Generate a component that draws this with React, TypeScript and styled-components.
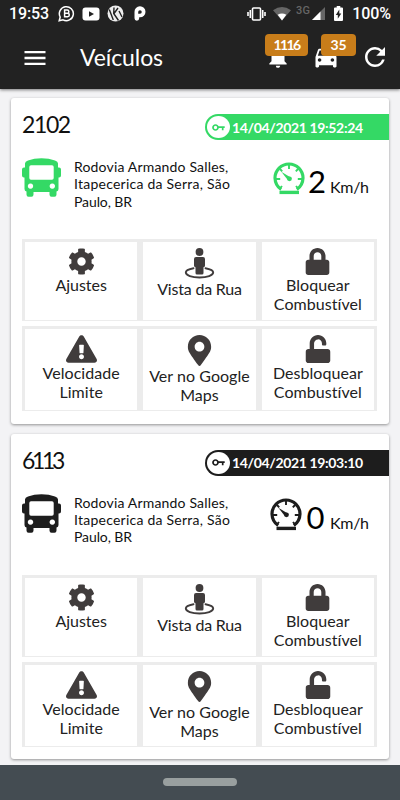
import React from "react";
import styled, { createGlobalStyle } from "styled-components";
import { FaCog, FaExclamationTriangle, FaLock, FaMapMarkerAlt, FaUnlock } from "react-icons/fa";
import { MdDirectionsCar, MdMenu, MdNotifications, MdRefresh } from "react-icons/md";

const Global = createGlobalStyle`
  * { box-sizing: border-box; }
  body { margin: 0; background: #f4f4f6; }
  svg { display: block; flex: none; }
`;

const Screen = styled.div`
  width: 400px;
  height: 800px;
  display: flex;
  flex-direction: column;
  overflow: hidden;
  background: #f3f3f5;
  color: #111;
  font-family: Lato, "Open Sans", sans-serif;
  white-space: nowrap;
`;

const Top = styled.header`
  height: 89px;
  background: #222;
  color: #fff;
  box-shadow: 0 1px 3px rgba(0, 0, 0, 0.5);
`;

const StatusBar = styled.div`
  height: 27px;
  padding: 0 9px;
  display: flex;
  align-items: center;
  justify-content: space-between;
  font-family: Roboto, sans-serif;
`;

const StatusGroup = styled.div`
  display: flex;
  align-items: center;
  height: 27px;
`;

const StatusText = styled.span<{ $size: number; $spacing: number }>`
  font-size: ${(p) => p.$size}px;
  font-weight: 500;
  letter-spacing: ${(p) => p.$spacing}px;
`;

const Network = styled.span`
  color: #666;
  font-size: 11px;
  font-weight: 500;
  letter-spacing: 0.3px;
  margin: 0 2px 6px 5px;
`;

const Toolbar = styled.div`
  height: 62px;
  display: flex;
  align-items: center;
  padding: 0 10px 0 21px;
`;

const PageTitle = styled.h1<{ $spacing: number }>`
  flex: 1;
  margin: -2px 0 0 31px;
  font-size: 23px;
  font-weight: 400;
  line-height: 30px;
  letter-spacing: ${(p) => p.$spacing}px;
`;

const Action = styled.div<{ $gap: number }>`
  position: relative;
  margin: -2px 0 0 ${(p) => p.$gap}px;
`;

const Badge = styled.span<{ $width: number; $left: number; $top: number; $spacing: number }>`
  position: absolute;
  left: ${(p) => p.$left}px;
  top: ${(p) => p.$top}px;
  width: ${(p) => p.$width}px;
  height: 22px;
  border-radius: 4px;
  background: #c87d1a;
  font-size: 14px;
  font-weight: 700;
  line-height: 21px;
  text-align: center;
  letter-spacing: ${(p) => p.$spacing}px;
`;

const List = styled.main`
  flex: 1;
  padding: 9px 11px 0;
  display: flex;
  flex-direction: column;
  gap: 10px;
`;

const Card = styled.article`
  height: 325.5px;
  flex: none;
  padding-left: 11px;
  background: #fff;
  border-radius: 3px;
  box-shadow: 0 1px 3px rgba(0, 0, 0, 0.4);
`;

const CardHead = styled.div`
  display: flex;
  justify-content: space-between;
  padding-top: 16px;
  height: 60px;
`;

const Plate = styled.h2<{ $spacing: number }>`
  margin: -4px 0 0;
  font-size: 23px;
  font-weight: 400;
  line-height: 28px;
  letter-spacing: ${(p) => p.$spacing}px;
`;

const Stamp = styled.div<{ $color: string }>`
  width: 184px;
  height: 26px;
  padding-left: 2px;
  display: flex;
  align-items: center;
  gap: 2px;
  border-radius: 13px 0 0 13px;
  background: ${(p) => p.$color};
  color: #fff;
  font-size: 14px;
  font-weight: 700;
`;

const StampText = styled.span<{ $spacing: number }>`
  letter-spacing: ${(p) => p.$spacing}px;
`;

const KeyDisc = styled.span<{ $color: string }>`
  width: 23px;
  height: 22px;
  border-radius: 50%;
  display: grid;
  place-items: center;
  background: #fff;
  color: ${(p) => p.$color};
`;

const Info = styled.div<{ $color: string }>`
  height: 81px;
  display: flex;
  color: ${(p) => p.$color};
`;

const Address = styled.p`
  width: 188px;
  margin: 0 0 0 13px;
  color: #111;
  font-size: 14px;
  line-height: 17.3px;
`;

const Line = styled.span<{ $spacing: number }>`
  display: block;
  letter-spacing: ${(p) => p.$spacing}px;
`;

const Speed = styled.div`
  flex: 1;
  height: 42px;
  padding: 4px 20px 0 0;
  display: flex;
  justify-content: flex-end;
`;

const SpeedValue = styled.span<{ $width: number }>`
  margin-left: 4px;
  color: #000;
  font-size: 31px;
  line-height: 38px;
  width: ${(p) => p.$width}px;
  display: flex;
  justify-content: center;
`;

const Unit = styled.span`
  margin-left: 5px;
  width: 39px;
  color: #111;
  font-size: 16px;
  line-height: 50px;
  letter-spacing: -0.3px;
`;

const Grid = styled.div`
  width: 355px;
  display: grid;
  grid-template-columns: repeat(3, 1fr);
  grid-template-rows: 82px 85px;
  row-gap: 5px;
`;

const Cell = styled.button`
  display: flex;
  flex-direction: column;
  align-items: center;
  min-width: 0;
  padding: 6px 0 0;
  border: solid #ececec;
  border-width: 3px 3px 1px;
  background: #fff;
  color: #403c3c;
  font-family: inherit;
`;

const Label = styled.span<{ $spacing: number }>`
  color: #222;
  font-size: 16px;
  line-height: 19.3px;
  text-align: center;
  white-space: nowrap;
  letter-spacing: ${(p) => p.$spacing}px;
`;

const NavBar = styled.footer`
  height: 35px;
  flex: none;
  background: #444c52;
  display: flex;
  justify-content: center;
  padding-top: 13px;
`;

const Handle = styled.div`
  width: 74px;
  height: 8px;
  border-radius: 4px;
  background: #999f9f;
`;

const Gauge = () => (
  <svg width="32" height="33" viewBox="0 0 32 33" fill="none" stroke="currentColor">
    <path d="M8.2 27.4Q2.200 23.500 2 16A14 14 0 0 1 30 16Q29.800 23.500 23.800 27.400" strokeWidth="3.2" />
    <path d="M3 17h4.200M24.800 17h4.200M16 3v4M7 7l2.200 2.400M25 7l-2.200 2.400M6.500 27l2.500-3M25.500 27l-2.500-3" strokeWidth="1.9" />
    <path d="M8.300 9.700L15 18.300L18.200 15.700Z" fill="currentColor" stroke="none" />
    <circle cx="16.5" cy="16.8" r="2.4" fill="currentColor" stroke="none" />
    <path d="M6.500 30.400h19.500" strokeWidth="3.4" />
  </svg>
);

const Bus = () => (
  <svg width="39" height="39" viewBox="0 0 39 39" fill="currentColor">
    <path
      fillRule="evenodd"
      d="M3 9.500V5.500Q3 3.500 6 2.400Q12 .3 19.500 .3T33 2.400Q36 3.500 36 5.500V9.500H37Q39 9.500 39 11.500V17.500Q39 19.500 37 19.500H36.500V31Q36.500 33 34.500 33.500V36.500Q34.500 38.800 32.500 38.800H29.500Q27.500 38.800 27.500 36.500V34H11.500V36.500Q11.500 38.800 9.500 38.800H6.500Q4.500 38.800 4.500 36.500V33.500Q2.500 33 2.500 31V19.500H2Q0 19.500 0 17.500V11.500Q0 9.500 2 9.500ZM9 7.300Q7.300 7.300 7.300 9V20Q7.300 21.700 9 21.700H30Q31.700 21.700 31.700 20V9Q31.700 7.300 30 7.300ZM8.500 25.400a2.700 2.700 0 1 0 .01 0ZM30.300 25.400a2.700 2.700 0 1 0 .01 0Z"
    />
  </svg>
);

const KeyIcon = () => (
  <svg width="13" height="7" viewBox="0 0 13 7" fill="none" stroke="currentColor" strokeWidth="1.7">
    <circle cx="3.500" cy="3.500" r="2.500" />
    <path d="M6 3.200H12.700M10.700 3v3.200" />
  </svg>
);

const StreetView = () => (
  <svg width="31" height="31" viewBox="0 0 31 31" fill="currentColor">
    <path d="M9.500 20.200Q1.800 21.600 1.800 24.300C1.800 27.400 7.900 29.500 15.500 29.500S29.200 27.400 29.200 24.300Q29.200 21.600 21.500 20.200" fill="none" stroke="currentColor" strokeWidth="1.900" strokeLinecap="round" />
    <circle cx="15.500" cy="4" r="3.900" />
    <path d="M12 9H19Q21 9 21 11V17.500Q21 19 19.500 19.300V25Q19.500 26.500 18 26.500H13Q11.500 26.500 11.500 25V19.300Q10 19 10 17.500V11Q10 9 12 9Z" />
  </svg>
);

const WarningIcon = styled(FaExclamationTriangle)`
  width: 31px;
  height: 28px;
`;

const BusinessChat = () => (
  <svg width="17" height="17" viewBox="0 0 17 17" fill="none" stroke="#fff" strokeWidth="1.5">
    <path d="M1.2 15.7L2.2 12A7 7 0 1 1 5 14.8Z" />
    <path d="M6.600 5h2.600a1.600 1.600 0 0 1 0 3.300H6.600ZM6.600 8.300h3a1.700 1.700 0 0 1 0 3.400h-3Z" />
  </svg>
);

const VideoApp = () => (
  <svg width="18" height="14" viewBox="0 0 18 14">
    <rect x="0.5" y="0.5" width="17" height="13" rx="3" fill="#fff" />
    <path d="M7 4.200v5.600L12 7Z" fill="#222" />
  </svg>
);

const RoundLogo = () => (
  <svg width="17" height="17" viewBox="0 0 17 17">
    <circle cx="8.500" cy="8.500" r="8" fill="#eee" />
    <path d="M2.300 4.500L6.300 15M7 2.500l-.3 6 4.800 7M7 8.500l4-5.500M12 6l3 6" stroke="#222" strokeWidth="1.4" fill="none" />
  </svg>
);

const ParkLogo = () => (
  <svg width="12" height="15" viewBox="0 0 12 15">
    <path fillRule="evenodd" fill="#fff" d="M.5 12.300V6A5.500 5.500 0 1 1 6 11.300H5.200V12.300A2.350 2.350 0 0 1 .5 12.300ZM6 4.200A1.800 1.800 0 0 0 4.200 6V7.700H6A1.750 1.750 0 0 0 6 4.200Z" />
  </svg>
);

const Vibrate = () => (
  <svg width="19" height="14" viewBox="0 0 19 14" fill="none" stroke="#fff" strokeWidth="1.6">
    <rect x="5.500" y="1" width="8" height="12" rx="1" />
    <path d="M3.300 3v8M15.700 3v8M1 5v4M18 5v4" />
  </svg>
);

const Wifi = () => (
  <svg width="18" height="14" viewBox="0 0 18 14">
    <path d="M0 3.200Q9-3 18 3.200L9 13.600Z" fill="#666" />
    <path d="M4.700 7.800Q9 5 13.300 7.800L9 13.600Z" fill="#fff" />
  </svg>
);

const Signal = () => (
  <svg width="13" height="13" viewBox="0 0 13 13">
    <path d="M0 13L13 0v13Z" fill="#666" />
    <path d="M0 13L8.500 4.500V13Z" fill="#fff" />
  </svg>
);

const Battery = () => (
  <svg width="9" height="15" viewBox="0 0 9 15">
    <path d="M2.700 0h3.600v1.500H8a1 1 0 0 1 1 1V14a1 1 0 0 1-1 1H1a1 1 0 0 1-1-1V2.500a1 1 0 0 1 1-1h1.700Z" fill="#fff" />
    <path d="M5.300 3.500L1.800 9h2v3.700L7.300 7.500H5.300Z" fill="#222" />
  </svg>
);

const Row = styled.div<{ $gaps: number[] }>`
  display: flex;
  align-items: center;
  ${(p) => p.$gaps.map((g, i) => `& > :nth-child(${i + 1}) { margin-left: ${g}px; }`).join("\n")}
`;

const actions = [
  { icon: <FaCog size={27} />, lines: ["Ajustes"], spacing: 0 },
  { icon: <StreetView />, lines: ["Vista da Rua"], spacing: -0.2 },
  { icon: <FaLock size={27} />, lines: ["Bloquear", "Combustível"], spacing: 0.05 },
  { icon: <WarningIcon />, lines: ["Velocidade", "Limite"], spacing: 0.05 },
  { icon: <FaMapMarkerAlt size={31} />, lines: ["Ver no Google", "Maps"], spacing: 0.05 },
  { icon: <FaUnlock size={28} />, lines: ["Desbloquear", "Combustível"], spacing: 0.05 },
];

const vehicles = [
  { plate: "2102", spacing: -1.4, time: "14/04/2021 19:52:24", timeSpacing: -0.35, speed: "2", digitWidth: 16, color: "#34d965" },
  { plate: "6113", spacing: -3.3, time: "14/04/2021 19:03:10", timeSpacing: -0.35, speed: "0", digitWidth: 19, color: "#1d1d1d" },
];

export default function App() {
  return (
    <Screen>
      <Global />
      <Top>
        <StatusBar>
          <StatusGroup>
            <StatusText $size={16} $spacing={-0.1}>19:53</StatusText>
            <Row $gaps={[9, 7, 7, 10]}>
              <BusinessChat />
              <VideoApp />
              <RoundLogo />
              <ParkLogo />
            </Row>
          </StatusGroup>
          <StatusGroup>
            <Row $gaps={[0, 7]}>
              <Vibrate />
              <Wifi />
            </Row>
            <Network>3G</Network>
            <Row $gaps={[0, 9]}>
              <Signal />
              <Battery />
            </Row>
            <Row $gaps={[9]}>
              <StatusText $size={16} $spacing={-0.1}>100%</StatusText>
            </Row>
          </StatusGroup>
        </StatusBar>
        <Toolbar>
          <MdMenu size={28} />
          <PageTitle $spacing={-0.1}>Veículos</PageTitle>
          <Action $gap={0}>
            <MdNotifications size={26} />
            <Badge $width={43} $left={0} $top={-10} $spacing={-1.6}>1116</Badge>
          </Action>
          <Action $gap={21}>
            <MdDirectionsCar size={28} />
            <Badge $width={35} $left={9} $top={-9} $spacing={-0.2}>35</Badge>
          </Action>
          <Action $gap={20}>
            <MdRefresh size={30} />
          </Action>
        </Toolbar>
      </Top>
      <List>
        {vehicles.map((v) => (
          <Card key={v.plate}>
            <CardHead>
              <Plate $spacing={v.spacing}>{v.plate}</Plate>
              <Stamp $color={v.color}>
                <KeyDisc $color={v.color}><KeyIcon /></KeyDisc>
                <StampText $spacing={v.timeSpacing}>{v.time}</StampText>
              </Stamp>
            </CardHead>
            <Info $color={v.color}>
              <Bus />
              <Address>
                <Line $spacing={0.17}>Rodovia Armando Salles,</Line>
                <Line $spacing={0.24}>Itapecerica da Serra, São</Line>
                <Line $spacing={-0.1}>Paulo, BR</Line>
              </Address>
              <Speed>
                <Gauge />
                <SpeedValue $width={v.digitWidth}>{v.speed}</SpeedValue>
                <Unit>Km/h</Unit>
              </Speed>
            </Info>
            <Grid>
              {actions.map((a) => (
                <Cell key={a.lines[0]}>
                  {a.icon}
                  {a.lines.map((l) => <Label key={l} $spacing={a.spacing}>{l}</Label>)}
                </Cell>
              ))}
            </Grid>
          </Card>
        ))}
      </List>
      <NavBar><Handle /></NavBar>
    </Screen>
  );
}
